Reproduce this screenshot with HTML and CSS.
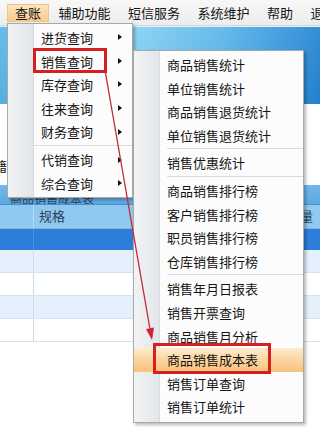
FILE: index.html
```html
<!DOCTYPE html>
<html lang="zh-CN">
<head>
<meta charset="utf-8">
<title>查账</title>
<link rel="stylesheet" href="styles.css">
</head>
<body>
<div class="app">
  <nav class="menubar">
    <span class="mi on">查账</span>
    <span class="mi">辅助功能</span>
    <span class="mi">短信服务</span>
    <span class="mi">系统维护</span>
    <span class="mi">帮助</span>
    <span class="mi">退出</span>
  </nav>
  <div class="toolbar"></div>
  <div class="form"><span class="cut">籍</span></div>
  <div class="grid">
    <div class="caption">商品销售成本表</div>
    <div class="row head"><div class="c c1"></div><div class="c c2">规格</div><div class="c c3">数量</div></div>
    <div class="row sel"><div class="c c1"></div><div class="c c2"></div><div class="c c3"></div></div>
    <div class="row alt"><div class="c c1"></div><div class="c c2"></div><div class="c c3"></div></div>
    <div class="row"><div class="c c1"></div><div class="c c2"></div><div class="c c3"></div></div>
    <div class="row alt"><div class="c c1"></div><div class="c c2"></div><div class="c c3"></div></div>
    <div class="row"><div class="c c1"></div><div class="c c2"></div><div class="c c3"></div></div>
  </div>

  <ul class="menu main">
    <li class="item">进货查询</li>
    <li class="item">销售查询</li>
    <li class="item">库存查询</li>
    <li class="item">往来查询</li>
    <li class="item">财务查询</li>
    <li class="sep"></li>
    <li class="item">代销查询</li>
    <li class="item">综合查询</li>
  </ul>

  <ul class="menu subm">
    <li class="item">商品销售统计</li>
    <li class="item">单位销售统计</li>
    <li class="item">商品销售退货统计</li>
    <li class="item">单位销售退货统计</li>
    <li class="sep"></li>
    <li class="item">销售优惠统计</li>
    <li class="sep"></li>
    <li class="item">商品销售排行榜</li>
    <li class="item">客户销售排行榜</li>
    <li class="item">职员销售排行榜</li>
    <li class="item">仓库销售排行榜</li>
    <li class="sep"></li>
    <li class="item">销售年月日报表</li>
    <li class="item">销售开票查询</li>
    <li class="item">商品销售月分析</li>
    <li class="item hot">商品销售成本表</li>
    <li class="item">销售订单查询</li>
    <li class="item">销售订单统计</li>
  </ul>

  <div class="mark mark-a"></div>
  <div class="mark mark-b"></div>
  <svg class="arrow" width="320" height="431" viewBox="0 0 320 431">
    <line x1="105.5" y1="73" x2="149.9" y2="328.5" stroke="#c0283a" stroke-width="1.3"/>
    <polygon points="152,340 154,327.5 146,328.9" fill="#d42030"/>
  </svg>
</div>
</body>
</html>
```
FILE: styles.css
```css
* { box-sizing: border-box; margin: 0; padding: 0; }
body {
  margin: 0;
  font-family: "Noto Sans CJK SC", "Noto Sans", sans-serif;
  font-size: 13px;
  color: #141414;
  background: #fff;
}
.app {
  position: relative;
  width: 320px;
  height: 431px;
  overflow: hidden;
  background: #fff;
}
.menubar {
  display: flex;
  align-items: center;
  gap: 1.5px;
  height: 26px;
  padding-left: 7px;
  background: linear-gradient(#f8f8f8, #ececec);
  border-bottom: 1px solid #d6d6d6;
  white-space: nowrap;
}
.mi {
  flex: none;
  height: 18px;
  line-height: 18px;
  padding: 0 8px;
}
.mi.on {
  background: linear-gradient(#fde6c0, #f9c98b);
  box-shadow: inset 0 0 0 1px #efc48c;
  border-radius: 1px;
}
.toolbar {
  height: 78px;
  border-top: 1px solid #e2f3fb;
  background:
    linear-gradient(rgba(255,255,255,0.08), rgba(0,40,120,0.06)),
    linear-gradient(to right, #5cb6e5 0%, #7ccdf0 25%, #84d1f2 42%, #5ab5e8 70%, #2585d2 100%);
}
.form {
  height: 81px;
  padding-top: 52px;
  line-height: 20px;
}
.cut {
  display: inline-block;
  margin-left: -6px;
}
.caption {
  height: 20px;
  line-height: 12px;
  padding-top: 8px;
  padding-left: 10px;
  font-size: 12px;
  color: #2d4660;
  background: linear-gradient(#72b8eb, #5ca7e2);
  border-bottom: 1px solid #4a8fce;
  overflow: hidden;
}
.row {
  display: flex;
  height: 23px;
  border-bottom: 1px solid #d3e3f0;
}
.row.head {
  height: 24px;
  background: #90c8f0;
  border-bottom: 1px solid #7cb7e6;
  color: #2a3e58;
}
.row.sel {
  height: 21px;
  background: #2c7ed9;
  border-bottom: none;
}
.row.alt { background: #e4f1fc; }
.c { line-height: 22px; }
.c1 { width: 34px; border-right: 1px solid #c9dcec; }
.row.head .c1 { border-right-color: #b6d8f2; }
.row.sel .c1 { border-right-color: #4a92e0; }
.c2 { width: 216px; padding-left: 5px; }
.c3 { flex: 1; text-align: right; padding-right: 7px; }

.menu {
  position: absolute;
  list-style: none;
  background-color: #fcfcfc;
  background-image: linear-gradient(to right, #f2f3f5, #e2e5e9), linear-gradient(#d7dbe0, #d7dbe0);
  background-size: 25px 100%, 1px 100%;
  background-position: 0 0, 25px 0;
  background-repeat: no-repeat;
  border: 1px solid #a9a9a9;
  box-shadow: 2px 2px 3px rgba(0, 0, 0, 0.28);
  padding: 2px 0 1px;
  white-space: nowrap;
}
.main { left: 7px; top: 23px; width: 126px; }
.subm { left: 133px; top: 50px; width: 171px; padding-bottom: 3px; }
.item {
  position: relative;
  height: 23.6px;
  line-height: 23.6px;
  padding-left: 33px;
}
.main .item::after {
  content: "";
  position: absolute;
  right: 10px;
  top: 50%;
  margin-top: -3.5px;
  border-left: 4px solid #111;
  border-top: 3.5px solid transparent;
  border-bottom: 3.5px solid transparent;
}
.sep {
  height: 0;
  border-top: 1px solid #dadada;
  border-bottom: 1px solid #fff;
  margin: 1px 0 1px 33px;
}
.main .sep { margin: 1.25px 0 1.25px 26px; }
.item.hot {
  background: linear-gradient(#fdecd0, #fbd59f 50%, #f8c27a);
}
.mark {
  position: absolute;
  border: 3px solid #d81f1f;
}
.mark-a { left: 33px; top: 48px; width: 74px; height: 25px; }
.mark-b { left: 153px; top: 343px; width: 118px; height: 31px; }
.arrow { position: absolute; left: 0; top: 0; }
```
